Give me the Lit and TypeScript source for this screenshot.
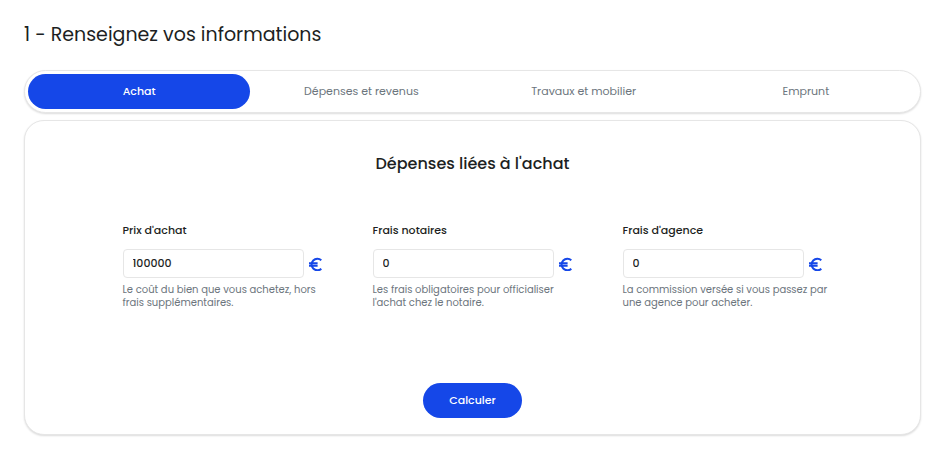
import { LitElement, html, css, svg } from "lit";
import { customElement, state } from "lit/decorators.js";
import { classMap } from "lit/directives/class-map.js";

interface Field {
  id: string;
  label: string;
  value: string;
  help: string;
}

const TABS = ["Achat", "Dépenses et revenus", "Travaux et mobilier", "Emprunt"];

const FIELDS: Field[] = [
  {
    id: "prix",
    label: "Prix d'achat",
    value: "100000",
    help: "Le coût du bien que vous achetez, hors frais supplémentaires.",
  },
  {
    id: "notaires",
    label: "Frais notaires",
    value: "0",
    help: "Les frais obligatoires pour officialiser l'achat chez le notaire.",
  },
  {
    id: "agence",
    label: "Frais d'agence",
    value: "0",
    help: "La commission versée si vous passez par une agence pour acheter.",
  },
];

const euroShape = svg`<path d="M13.3 4.2A5.8 5.8 0 1 0 13.3 12.8M1 7.2H9.6M1 9.8H9.6"></path>`;

@customElement("app-root")
export class AppRoot extends LitElement {
  @state() private active = 0;

  static styles = css`
    :host {
      display: block;
      box-sizing: border-box;
      padding: 21px 25px 20px 24px;
      background: #fff;
      color: #1d1f23;
      font-family: Poppins, Inter, "Open Sans", sans-serif;
      font-size: 11px;
    }
    *,
    *::before {
      box-sizing: border-box;
    }
    h1 {
      margin: 0 0 21px;
      font-size: 19px;
      line-height: 28px;
      font-weight: 400;
    }
    button,
    input {
      font: inherit;
      color: inherit;
    }
    .tabs,
    .card {
      border: 1px solid #e6e6e6;
      border-radius: 20px;
      background: #fff;
      box-shadow: 0 1px 2px rgba(0, 0, 0, 0.14);
    }
    .tabs {
      display: grid;
      grid-template-columns: repeat(4, 1fr);
      padding: 3px;
      border-radius: 22px;
      margin-bottom: 7px;
    }
    .tab {
      height: 35px;
      padding: 0;
      border: 0;
      border-radius: 18px;
      background: none;
      color: #6c757d;
      cursor: pointer;
    }
    .tab.active {
      background: #1547e8;
      color: #fff;
      font-weight: 500;
    }
    .card {
      display: flex;
      flex-direction: column;
      align-items: center;
      padding: 31px 24px 16px;
    }
    h2 {
      margin: 0 0 46px;
      font-size: 16px;
      line-height: 24px;
      font-weight: 500;
    }
    .fields {
      display: grid;
      grid-template-columns: repeat(3, 200px);
      gap: 50px;
      margin-bottom: 74px;
    }
    .label {
      display: block;
      margin-bottom: 11px;
      line-height: 16px;
      font-weight: 500;
    }
    .entry {
      display: flex;
      align-items: center;
      gap: 4px;
      margin-bottom: 5px;
    }
    .input {
      flex: 1;
      min-width: 0;
      height: 29px;
      padding: 0 9px;
      border: 1px solid #e6e6e6;
      border-radius: 4px;
      background: #fff;
      font-weight: 500;
    }
    .euro {
      width: 15px;
      height: 15px;
      flex: none;
      fill: none;
      stroke: #1547e8;
      stroke-width: 2;
    }
    .help {
      margin: 0 -10px 0 0;
      color: #6c757d;
      font-size: 10px;
      line-height: 13px;
    }
    .submit {
      height: 35px;
      padding: 0 26px;
      border: 0;
      border-radius: 18px;
      background: #1547e8;
      color: #fff;
      font-weight: 500;
      cursor: pointer;
    }
  `;

  private renderField(field: Field) {
    return html`
      <div class="field">
        <label class="label" for=${field.id}>${field.label}</label>
        <div class="entry">
          <input
            class="input"
            id=${field.id}
            type="text"
            inputmode="numeric"
            aria-describedby="${field.id}-help"
            .value=${field.value}
          />
          <svg class="euro" viewBox="0 0 15 15" aria-hidden="true">${euroShape}</svg>
        </div>
        <p class="help" id="${field.id}-help">${field.help}</p>
      </div>
    `;
  }

  render() {
    return html`
      <h1>1 - Renseignez vos informations</h1>
      <div class="tabs" role="tablist">
        ${TABS.map(
          (name, i) => html`<button
            type="button"
            role="tab"
            class=${classMap({ tab: true, active: i === this.active })}
            aria-selected=${i === this.active ? "true" : "false"}
            @click=${() => (this.active = i)}
          >
            ${name}
          </button>`,
        )}
      </div>
      <form class="card" @submit=${(e: Event) => e.preventDefault()}>
        <h2>Dépenses liées à l'achat</h2>
        <div class="fields">${FIELDS.map((f) => this.renderField(f))}</div>
        <button class="submit" type="submit">Calculer</button>
      </form>
    `;
  }
}
